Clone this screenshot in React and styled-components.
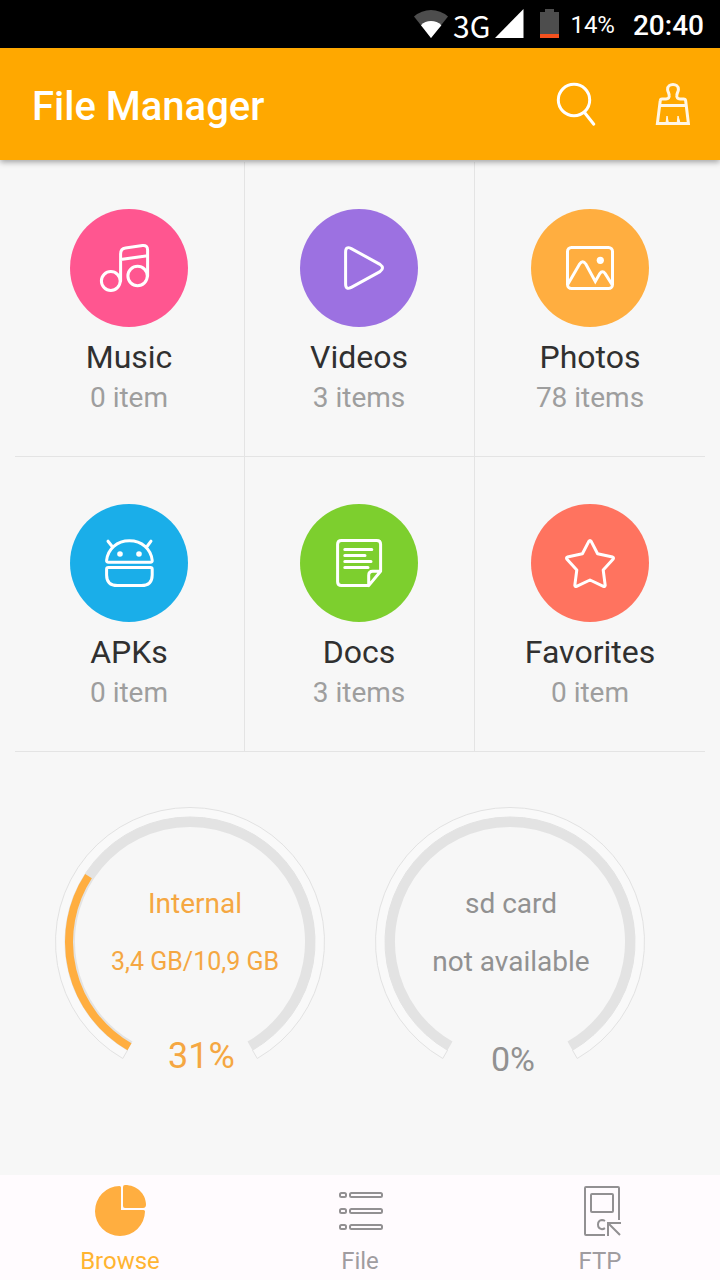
import React from 'react';
import styled, { createGlobalStyle } from 'styled-components';

const GlobalStyle = createGlobalStyle`
  * { box-sizing: border-box; }
  body {
    margin: 0;
    background: #f7f7f7;
    font-family: Roboto, "Liberation Sans", sans-serif;
  }
  button { font: inherit; color: inherit; background: none; border: 0; padding: 0; cursor: pointer; }
  svg { display: block; }
`;

const Screen = styled.div`
  min-height: 100vh;
  display: flex;
  flex-direction: column;
`;

const StatusBar = styled.div`
  height: 48px;
  padding-right: 16px;
  display: flex;
  align-items: center;
  justify-content: flex-end;
  background: #000;
  color: #fff;
`;

const Network = styled.div`
  display: flex;
  align-items: center;
  gap: 5px;
  margin-right: 16px;
`;

const NetworkType = styled.span`
  padding-top: 2px;
  font-family: "Noto Sans CJK SC", "Noto Sans", sans-serif;
  font-size: 30px;
  line-height: 44px;
`;

const BatteryLevel = styled.span`
  margin: 0 18px 0 11px;
  padding-top: 2px;
  font-size: 24px;
  line-height: 44px;
`;

const Clock = styled.time`
  padding-top: 4px;
  font-size: 28px;
  font-weight: 500;
  line-height: 44px;
`;

const Header = styled.header`
  position: relative;
  z-index: 1;
  height: 112px;
  padding: 0 26px 0 32px;
  display: flex;
  align-items: center;
  gap: 54px;
  background: #ffa800;
  color: #fff;
  box-shadow: 0 2px 6px rgba(0, 0, 0, 0.36);
`;

const Title = styled.h1`
  flex: 1;
  margin: 0;
  padding-top: 6px;
  font-size: 40px;
  font-weight: 500;
  line-height: 48px;
`;

const Main = styled.main`
  flex: 1;
  padding: 2px 15px 0;
`;

const CategoryGrid = styled.div`
  display: grid;
  grid-template-columns: repeat(3, 1fr);
`;

const Category = styled.button`
  height: 295px;
  padding-top: 47px;
  display: flex;
  flex-direction: column;
  align-items: center;
  border-bottom: 1px solid #e4e4e4;
  &:not(:nth-child(3n)) {
    padding-right: 1px;
    border-right: 1px solid #e4e4e4;
  }
`;

const Disc = styled.span`
  width: 118px;
  height: 118px;
  margin-bottom: 10px;
  border-radius: 50%;
  background: ${(p) => p.$color};
`;

const CategoryName = styled.span`
  font-size: 32px;
  line-height: 40px;
  color: #303030;
`;

const CategoryCount = styled.span`
  font-size: 28px;
  line-height: 42px;
  color: #9e9e9e;
`;

const Gauges = styled.section`
  display: flex;
  justify-content: center;
  gap: 50px;
  padding: 55px 20px 40px 0;
  margin: 0 -15px;
`;

const GaugeButton = styled.button`
  width: 270px;
  display: grid;
  align-items: start;
  > * { grid-area: 1 / 1; }
`;

const GaugeText = styled.span`
  display: flex;
  flex-direction: column;
  padding-top: 68px;
  color: ${(p) => (p.$active ? '#f5a742' : '#919191')};
`;

const GaugeLine = styled.span`
  padding-left: ${(p) => (p.$active ? 10 : 2)}px;
  font-size: ${(p) => (p.$small ? 25 : 28)}px;
  line-height: 58px;
  text-align: center;
`;

const GaugePercent = styled.span`
  margin-top: 43px;
  padding-left: ${(p) => (p.$active ? 113 : 116)}px;
  font-size: ${(p) => (p.$active ? 36 : 34)}px;
  line-height: ${(p) => (p.$active ? 44 : 50)}px;
  text-align: left;
`;

const TabBar = styled.nav`
  display: grid;
  grid-template-columns: repeat(3, 1fr);
  background: #fffbfe;
`;

const Tab = styled.button`
  padding: 7px 0 5px;
  display: flex;
  flex-direction: column;
  align-items: center;
  gap: 9px;
  font-size: 24px;
  line-height: 28px;
  color: ${(p) => (p.$active ? '#ffb431' : '#a09ca0')};
`;

const LineIcon = styled.svg.attrs({
  fill: 'none',
  strokeLinecap: 'round',
  strokeLinejoin: 'round',
  'aria-hidden': true,
})`
  stroke: ${(p) => p.$stroke || '#fff'};
  stroke-width: ${(p) => p.$weight || 3};
`;

const glyphs = {
  music: (
    <>
      <circle cx="40.8" cy="72" r="9.4" />
      <circle cx="67.6" cy="67" r="9.7" />
      <path d="M50.6 72V45Q50.6 39.6 55.5 39L72.5 36.6Q77.6 36 77.6 41V67M50.6 50.6L77.6 46.8" />
    </>
  ),
  videos: <path d="M45.6 43Q45.6 36.6 51.3 39.6L80 55.4Q85 59 80 62.6L51.3 78.4Q45.6 81.4 45.6 75Z" />,
  photos: (
    <>
      <rect x="36.5" y="38.5" width="45" height="41" rx="4" />
      <path strokeLinejoin="miter" d="M37 75L48.6 55Q51.7 50.6 54.8 55L64.3 72.5L68.8 64.6Q71.4 61 74.2 64.6L81 75.5" />
      <circle cx="69.3" cy="51.3" r="3.6" fill="#fff" stroke="none" />
    </>
  ),
  apks: (
    <>
      <path d="M38.5 58.3Q36.4 58.3 36.6 56.3C37.8 45 46.9 36.7 59.4 36.7S81 45 82.2 56.3Q82.4 58.3 80.4 58.3Z" />
      <path d="M38.4 63.4H80.4Q82.2 63.4 82.2 65.2V71Q82.2 81.6 71.5 81.6H47.4Q36.6 81.6 36.6 71V65.2Q36.6 63.4 38.4 63.4Z" />
      <path d="M38 37.2L41.8 42M81 37.2L77.4 42" />
      <circle cx="50" cy="50" r="2.8" fill="#fff" stroke="none" />
      <circle cx="69" cy="50" r="2.8" fill="#fff" stroke="none" />
    </>
  ),
  docs: (
    <>
      <path d="M68.7 81.6H41.5Q37.6 81.6 37.6 77.7V40.3Q37.6 36.4 41.5 36.4H76.7Q80.6 36.4 80.6 40.3V67.3L68.7 81.6V71.3Q68.7 67.3 72.7 67.3H80.6" />
      <path d="M44.8 45.4H71.8M44.8 51.4H65M44.8 57.4H71M44.8 63.4H68" />
    </>
  ),
  favorites: (
    <path d="M57.8 37.4Q59 35.6 60.2 37.4L66.6 49.8L81.6 53Q83.2 53.8 82 55.2L72.2 66L74.2 81.4Q74 83 72.4 82.4L59 76L45.6 82.4Q44 83 43.8 81.4L45.8 66L36 55.2Q34.8 53.8 36.4 53L51.4 49.8Z" />
  ),
};

const categories = [
  { id: 'music', name: 'Music', count: '0 item', color: '#ff5690' },
  { id: 'videos', name: 'Videos', count: '3 items', color: '#9c71e1' },
  { id: 'photos', name: 'Photos', count: '78 items', color: '#ffae40' },
  { id: 'apks', name: 'APKs', count: '0 item', color: '#1aaee9' },
  { id: 'docs', name: 'Docs', count: '3 items', color: '#7dcf2e' },
  { id: 'favorites', name: 'Favorites', count: '0 item', color: '#ff735f' },
];

// Point on a circle round the origin; degrees run clockwise from the bottom.
const point = (r, deg) => {
  const a = (deg * Math.PI) / 180;
  return `${(-r * Math.sin(a)).toFixed(2)} ${(r * Math.cos(a)).toFixed(2)}`;
};

const arc = (r, from, to) =>
  `M${point(r, from)}A${r} ${r} 0 ${to - from > 180 ? 1 : 0} 1 ${point(r, to)}`;

function Gauge({ label, detail, percent, active, small }) {
  return (
    <GaugeButton type="button">
      <svg width="270" height="270" viewBox="-135 -135 270 270" fill="none" aria-hidden="true">
        <path
          d={`${arc(134.5, 30, 330)}L${point(125, 330)}A125 125 0 1 0 ${point(125, 30)}Z`}
          fill="#f9f9f9"
          stroke="#e2e2e2"
        />
        <path d={arc(120, 30, 330)} stroke="#e3e3e3" strokeWidth="10" />
        {percent > 0 && (
          <path d={arc(121, 30, 30 + percent * 3)} stroke="#ffae40" strokeWidth="8" />
        )}
      </svg>
      <GaugeText $active={active}>
        <GaugeLine $active={active}>{label}</GaugeLine>
        <GaugeLine $active={active} $small={small}>{detail}</GaugeLine>
        <GaugePercent $active={active}>{percent}%</GaugePercent>
      </GaugeText>
    </GaugeButton>
  );
}

export default function App() {
  return (
    <Screen>
      <GlobalStyle />
      <StatusBar>
        <Network>
          <svg width="34" height="30" viewBox="0 0 34 30" aria-hidden="true">
            <path d="M0 7.5Q7.5 1 17 1T34 7.5L17 29Z" fill="#4d4d4d" />
            <path d="M7 16.2Q11 12 17 12T27.4 16.2L17 29Z" fill="#fff" />
          </svg>
          <NetworkType>3G</NetworkType>
          <svg width="29" height="30" viewBox="0 0 29 30" aria-hidden="true">
            <path d="M0 29L28.5 0V29Z" fill="#fff" />
          </svg>
        </Network>
        <svg width="19" height="30" viewBox="0 0 19 30" aria-hidden="true">
          <path d="M0 3H5V0H14V3H19V26H0Z" fill="#4d4d4d" />
          <path d="M0 25H19V29H0Z" fill="#f4511e" />
        </svg>
        <BatteryLevel>14%</BatteryLevel>
        <Clock>20:40</Clock>
      </StatusBar>

      <Header>
        <Title>File Manager</Title>
        <button type="button" aria-label="Search">
          <LineIcon width="44" height="48" viewBox="0 0 44 48">
            <circle cx="20" cy="20" r="15.7" />
            <path d="M30.3 32.3L39.8 44.2" />
          </LineIcon>
        </button>
        <button type="button" aria-label="Clean">
          <LineIcon width="42" height="48" viewBox="0 0 42 48" $stroke="#fff6e6">
            <path
              strokeLinejoin="miter"
              d="M10 19H14Q17.6 19 17.2 15.4C17 12.6 15.6 11.6 15.6 9.4C15.6 3 26.4 3 26.4 9.4C26.4 11.6 25 12.6 24.8 15.4Q24.4 19 28 19H31.6Q33.4 19 33.7 21L36.4 43.4H5.4L8.2 21Q8.4 19 10 19ZM8 25.4H34"
            />
            <path d="M14 43L15 36L16.4 43ZM25.2 43L26 36L28 43Z" fill="#fff6e6" strokeWidth="1" />
          </LineIcon>
        </button>
      </Header>

      <Main>
        <CategoryGrid>
          {categories.map((c) => (
            <Category key={c.id} type="button">
              <Disc $color={c.color}>
                <LineIcon width="118" height="118" viewBox="0 0 118 118">{glyphs[c.id]}</LineIcon>
              </Disc>
              <CategoryName>{c.name}</CategoryName>
              <CategoryCount>{c.count}</CategoryCount>
            </Category>
          ))}
        </CategoryGrid>
        <Gauges>
          <Gauge label="Internal" detail="3,4 GB/10,9 GB" percent={31} active small />
          <Gauge label="sd card" detail="not available" percent={0} />
        </Gauges>
      </Main>

      <TabBar>
        <Tab type="button" $active aria-current="page">
          <svg width="56" height="56" viewBox="0 0 56 56" fill="#ffae40" aria-hidden="true">
            <path d="M27.5 4Q29 4 29 5.5V28H51.5Q53 28 53 29.5A25 25 0 1 1 27.5 4Z" />
            <path d="M33 3C44.5 3 53.6 11.5 54 22Q54.2 26 51 26H33Q31 26 31 24V5Q31 3 33 3Z" />
          </svg>
          Browse
        </Tab>
        <Tab type="button">
          <LineIcon width="56" height="56" viewBox="0 0 56 56" $stroke="#929092" $weight={2}>
            {[11, 27, 43].map((y) => (
              <React.Fragment key={y}>
                <rect x="8" y={y} width="6" height="4" rx="1.5" />
                <rect x="18" y={y} width="32" height="4" rx="1.5" />
              </React.Fragment>
            ))}
          </LineIcon>
          File
        </Tab>
        <Tab type="button">
          <LineIcon width="56" height="56" viewBox="0 0 56 56" $stroke="#929092" $weight={2}>
            <path strokeLinecap="butt" d="M33 53H14Q13 53 13 52V6Q13 5 14 5H46Q47 5 47 6V38" />
            <rect x="19" y="12" width="22" height="18" rx="1" />
            <path strokeLinecap="butt" d="M33 39Q31.5 38 30 38Q26 38.4 26 42.6T30 47.2Q31.5 47.2 33 46.2" />
            <path strokeLinecap="butt" strokeLinejoin="miter" d="M49 41H36V54M36 41L48 53" />
          </LineIcon>
          FTP
        </Tab>
      </TabBar>
    </Screen>
  );
}
